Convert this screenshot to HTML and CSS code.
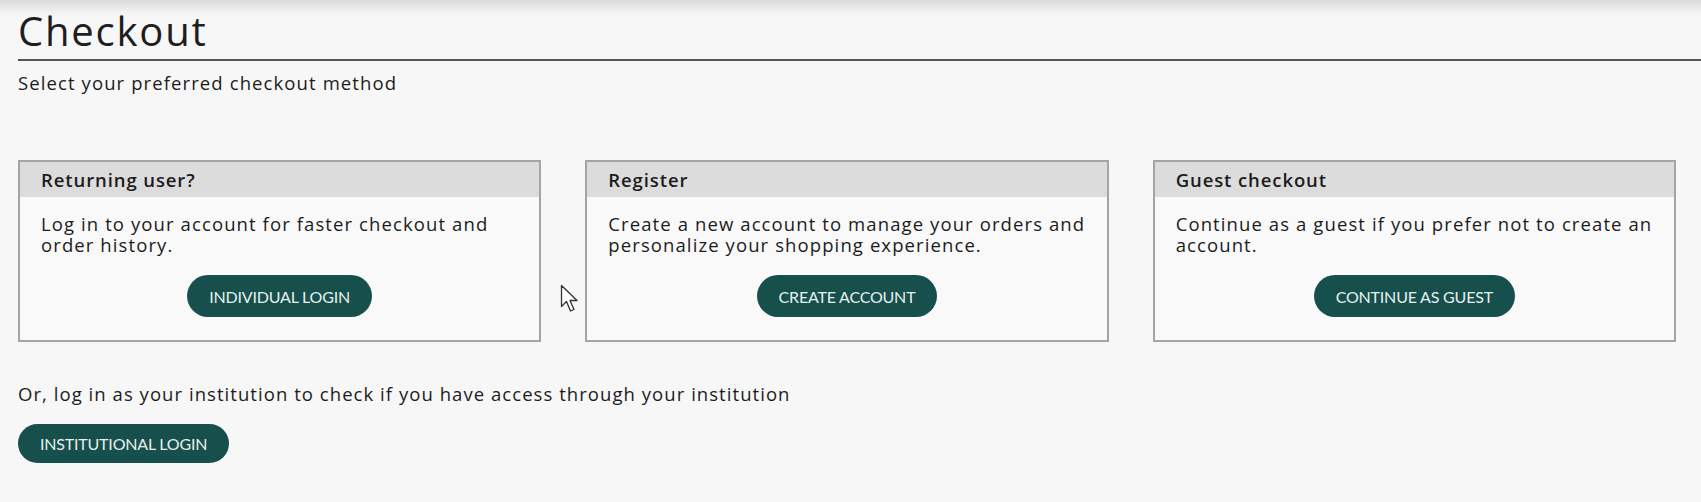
FILE: index.html
```html
<!DOCTYPE html>
<html lang="en">
<head>
<meta charset="utf-8">
<title>Checkout</title>
<link rel="stylesheet" href="styles.css">
</head>
<body>
<div class="page">
  <header class="page-head">
    <h1 class="title">Checkout</h1>
  </header>
  <main class="content">
    <p class="subtitle">Select your preferred checkout method</p>
    <section class="cards">
      <div class="card">
        <div class="card-head">Returning user?</div>
        <div class="card-body">
          <p class="card-text">Log in to your account for faster checkout and order history.</p>
          <a class="btn" href="#">INDIVIDUAL LOGIN</a>
        </div>
      </div>
      <div class="card">
        <div class="card-head">Register</div>
        <div class="card-body">
          <p class="card-text">Create a new account to manage your orders and personalize your shopping experience.</p>
          <a class="btn" href="#">CREATE ACCOUNT</a>
        </div>
      </div>
      <div class="card">
        <div class="card-head">Guest checkout</div>
        <div class="card-body">
          <p class="card-text">Continue as a guest if you prefer not to create an account.</p>
          <a class="btn" href="#">CONTINUE AS GUEST</a>
        </div>
      </div>
    </section>
    <p class="inst-text">Or, log in as your institution to check if you have access through your institution</p>
    <a class="btn btn-inst" href="#">INSTITUTIONAL LOGIN</a>
  </main>
  <svg class="cursor" width="22" height="30" viewBox="0 0 22 30" aria-hidden="true">
    <path d="M1.5 1.5 L1.5 22.5 L6.5 17.5 L10.5 27 L14 25.5 L10 16.5 L17 16.5 Z" fill="#ffffff" stroke="#333333" stroke-width="1.3" stroke-linejoin="round"/>
  </svg>
</div>
</body>
</html>
```
FILE: styles.css
```css
html {
  background: #f7f7f7;
}
body {
  margin: 0;
  background: linear-gradient(#d9d9d9 0px, #f2f2f2 12px, #f7f7f7 18px) no-repeat;
  background-size: 100% 20px;
  font-family: "Open Sans", "Lato", sans-serif;
  color: #1c1c1c;
  min-height: 502px;
}
.page {
  position: relative;
  padding-left: 18px;
}
.page-head {
  border-bottom: 2px solid #555555;
  padding-top: 6px;
  padding-bottom: 3px;
}
.title {
  margin: 0;
  font-family: "Open Sans", sans-serif;
  font-weight: 400;
  font-size: 40px;
  line-height: 50px;
  color: #1e1e1e;
  letter-spacing: 1.8px;
}
.content {
  padding-right: 25px;
}
.subtitle {
  margin: 11px 0 0;
  font-size: 18.5px;
  line-height: 22px;
  letter-spacing: 1.1px;
}
.cards {
  display: grid;
  grid-template-columns: repeat(3, 1fr);
  column-gap: 44px;
  margin-top: 66px;
}
.card {
  border: 2px solid #a4a4a4;
  background: #f9f9f9;
}
.card-head {
  background: #dcdcdc;
  height: 35px;
  display: flex;
  align-items: center;
  padding-left: 21px;
  font-size: 18.5px;
  font-weight: 600;
  letter-spacing: 0.9px;
  color: #1c1c1c;
}
.card-body {
  padding: 17px 21px 23px;
  display: flex;
  flex-direction: column;
  align-items: center;
}
.card-text {
  margin: 0 -7px 0 0;
  align-self: stretch;
  font-size: 18.5px;
  line-height: 20.5px;
  letter-spacing: 1.1px;
}
.btn {
  display: inline-flex;
  align-items: center;
  justify-content: center;
  height: 42px;
  padding: 0 22px;
  margin-top: 20px;
  border-radius: 21px;
  background: #174f4c;
  color: #e6efee;
  text-decoration: none;
  font-family: "Lato", sans-serif;
  font-size: 16px;
  letter-spacing: -0.2px;
  box-sizing: border-box;
}
.inst-text {
  margin: 41px 0 0;
  font-size: 18.5px;
  line-height: 22px;
  letter-spacing: 1.05px;
}
.btn-inst {
  margin-top: 19px;
  height: 39px;
}
.cursor {
  position: absolute;
  left: 560px;
  top: 284px;
}
```
